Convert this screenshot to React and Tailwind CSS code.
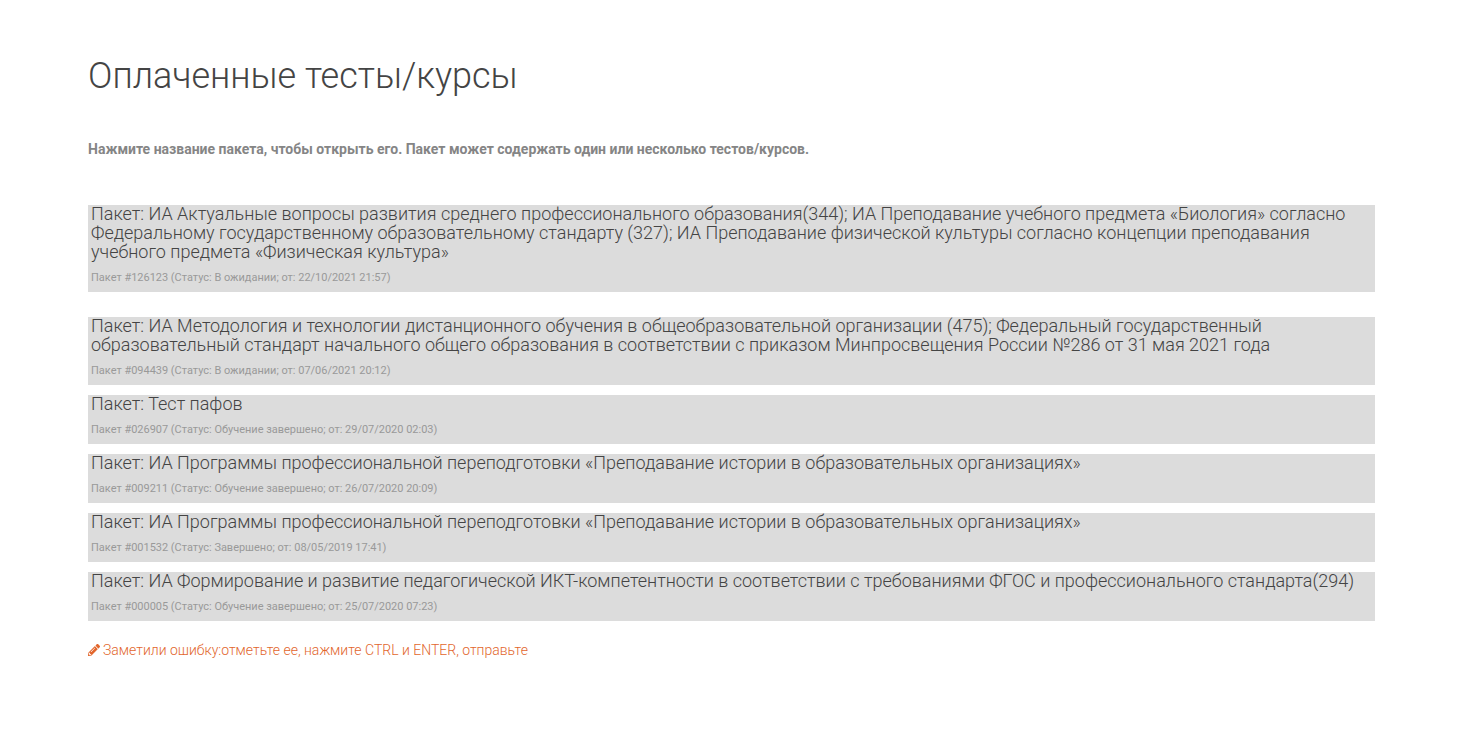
import { FaPencilAlt } from 'react-icons/fa';

const packages = [
  {
    title: 'Пакет: ИА Актуальные вопросы развития среднего профессионального образования(344); ИА Преподавание учебного предмета «Биология» согласно Федеральному государственному образовательному стандарту (327); ИА Преподавание физической культуры согласно концепции преподавания учебного предмета «Физическая культура»',
    meta: 'Пакет #126123 (Статус: В ожидании; от: 22/10/2021 21:57)',
    className: 'mb-[25px]',
  },
  {
    title: 'Пакет: ИА Методология и технологии дистанционного обучения в общеобразовательной организации (475); Федеральный государственный образовательный стандарт начального общего образования в соответствии с приказом Минпросвещения России №286 от 31 мая 2021 года',
    meta: 'Пакет #094439 (Статус: В ожидании; от: 07/06/2021 20:12)',
    className: 'mb-[10px]',
  },
  {
    title: 'Пакет: Тест пафов',
    meta: 'Пакет #026907 (Статус: Обучение завершено; от: 29/07/2020 02:03)',
    className: 'mb-[10px]',
  },
  {
    title: 'Пакет: ИА Программы профессиональной переподготовки «Преподавание истории в образовательных организациях»',
    meta: 'Пакет #009211 (Статус: Обучение завершено; от: 26/07/2020 20:09)',
    className: 'mb-[10px]',
  },
  {
    title: 'Пакет: ИА Программы профессиональной переподготовки «Преподавание истории в образовательных организациях»',
    meta: 'Пакет #001532 (Статус: Завершено; от: 08/05/2019 17:41)',
    className: 'mb-[10px]',
  },
  {
    title: 'Пакет: ИА Формирование и развитие педагогической ИКТ-компетентности в соответствии с требованиями ФГОС и профессионального стандарта(294)',
    meta: 'Пакет #000005 (Статус: Обучение завершено; от: 25/07/2020 07:23)',
    className: 'mb-[10px]',
  },
];

export default function App() {
  return (
    <div className="min-h-[733px] bg-white px-[88px] pt-[52px] font-['Roboto',sans-serif]">
      <h1 className="text-[36px] leading-[48px] font-light text-[#444444]">Оплаченные тесты/курсы</h1>
      <p className="mt-[39px] mb-[46px] text-[14px] leading-[20px] font-bold text-[#858585]">
        Нажмите название пакета, чтобы открыть его. Пакет может содержать один или несколько тестов/курсов.
      </p>
      <div>
        {packages.map((pkg) => (
          <div key={pkg.meta} className={`flex flex-col bg-[#dcdcdc] px-[3px] ${pkg.className}`}>
            <div className="-mt-px text-[18px] leading-[19px] font-light text-[#444444]">{pkg.title}</div>
            <div className="h-[31px] pt-[9px] text-[10.98px] leading-[16px] text-[#999999]">{pkg.meta}</div>
          </div>
        ))}
      </div>
      <div className="mt-[19px] flex items-center gap-[3px] text-[14px] leading-[20px] font-light text-[#e2662c]">
        <FaPencilAlt size={12} />
        <span>Заметили ошибку:отметьте ее, нажмите CTRL и ENTER, отправьте</span>
      </div>
    </div>
  );
}
